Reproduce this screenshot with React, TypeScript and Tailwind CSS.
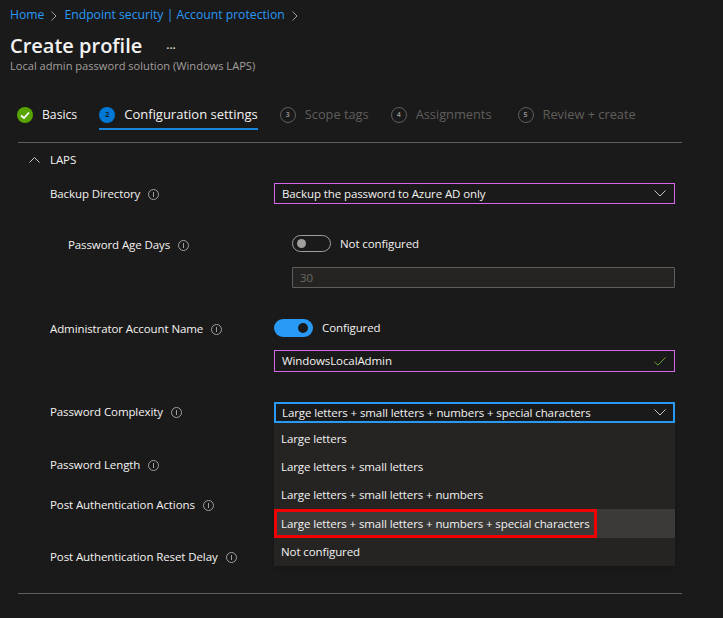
import React from 'react';

function Chevron({ className }: { className?: string }) {
    return (
        <svg width="12" height="7" viewBox="0 0 12 7" fill="none" stroke="#c8c6c4" strokeWidth="1" className={className}>
            <path d="M0.5 0.5 L6 6 L11.5 0.5" />
        </svg>
    );
}

function BreadcrumbArrow() {
    return (
        <svg width="6" height="10" viewBox="0 0 6 10" fill="none" stroke="#a19f9d" strokeWidth="1">
            <path d="M0.5 0.5 L5 5 L0.5 9.5" />
        </svg>
    );
}

function InfoIcon() {
    return (
        <svg width="11" height="11" viewBox="0 0 11 11" fill="none" className="ml-[8px] shrink-0">
            <circle cx="5.5" cy="5.5" r="5" stroke="#a19f9d" strokeWidth="1" />
            <path d="M5.5 3 V8" stroke="#a19f9d" strokeWidth="1" />
        </svg>
    );
}

function Step({ n, label, ml }: { n: number; label: string; ml: string }) {
    return (
        <div className={`flex items-center ${ml}`}>
            <span className="flex h-[16px] w-[16px] items-center justify-center rounded-full border border-[#5f5e5c] text-[7px] font-bold text-[#8a8886]">
                {n}
            </span>
            <span className="ml-[9px] text-[12.8px] text-[#5f5e5c]">{label}</span>
        </div>
    );
}

function Label({ text, indent, top }: { text: string; indent?: boolean; top: string }) {
    return (
        <div className={`flex h-[20px] items-center text-[#f3f2f1] ${indent ? 'ml-[18px]' : ''} ${top}`}>
            {text}
            <InfoIcon />
        </div>
    );
}

const options = [
    'Large letters',
    'Large letters + small letters',
    'Large letters + small letters + numbers',
    'Large letters + small letters + numbers + special characters',
    'Not configured',
];

export default function App() {
    return (
        <div className="h-[618px] w-[723px] overflow-hidden bg-[#1b1a1a] font-['Open_Sans',sans-serif]">
            <div className="flex h-[30px] items-center pl-[10px] pt-[1px] text-[12.2px] text-[#2899f5]">
                <span>Home</span>
                <span className="mx-[7px]"><BreadcrumbArrow /></span>
                <span>Endpoint security | Account protection</span>
                <span className="ml-[7px]"><BreadcrumbArrow /></span>
            </div>
            <div className="flex h-[30px] items-center pl-[10px] pt-[2px]">
                <h1 className="text-[20px] font-semibold text-[#f3f2f1]">Create profile</h1>
                <span className="ml-[24px] mb-[3px] text-[11px] font-bold leading-none text-[#d2d0ce]">...</span>
            </div>
            <p className="pl-[10px] text-[11.1px] leading-[12px] text-[#a19f9d]">Local admin password solution (Windows LAPS)</p>

            <div className="ml-[18px] mt-[19px] h-[52px] w-[664px] border-b border-[#605e5c] pt-[10px]">
                <div className="flex h-[28px] items-center -ml-px">
                    <svg width="16" height="16" viewBox="0 0 16 16" className="shrink-0">
                        <circle cx="8" cy="8" r="8" fill="#57a300" />
                        <path d="M4 8.5 L7 11 L12 5.5" fill="none" stroke="#fff" strokeWidth="1.8" />
                    </svg>
                    <span className="ml-[9px] text-[12.2px] text-[#f3f2f1]">Basics</span>
                    <div className="relative ml-[22px] flex h-[28px] items-center">
                        <span className="flex h-[16px] w-[16px] items-center justify-center rounded-full bg-[#0078d4] text-[7px] font-bold text-[#1b1a1a]">2</span>
                        <span className="ml-[9px] text-[13px] text-[#f3f2f1]">Configuration settings</span>
                        <div className="absolute bottom-[-1px] left-0 right-0 h-[2px] bg-[#1a86d9]" />
                    </div>
                    <Step n={3} label="Scope tags" ml="ml-[22px]" />
                    <Step n={4} label="Assignments" ml="ml-[22px]" />
                    <Step n={5} label="Review + create" ml="ml-[26px]" />
                </div>
            </div>

            <div className="ml-[18px] h-[451px] w-[664px] border-b border-[#605e5c] text-[11.5px] tracking-[-0.1px]">
                <div className="flex h-[33px] items-center pl-[11px]">
                    <svg width="11" height="6" viewBox="0 0 11 6" fill="none" stroke="#c8c6c4" strokeWidth="1">
                        <path d="M0.5 5.5 L5.5 0.5 L10.5 5.5" />
                    </svg>
                    <span className="ml-[10px] text-[#f3f2f1]">LAPS</span>
                </div>

                <div className="flex pl-[32px]">
                    <div className="w-[224px] shrink-0">
                        <Label text="Backup Directory" top="mt-[8px]" />
                        <Label text="Password Age Days" indent top="mt-[31px]" />
                        <Label text="Administrator Account Name" top="mt-[64px]" />
                        <Label text="Password Complexity" top="mt-[63px]" />
                        <Label text="Password Length" top="mt-[33px]" />
                        <Label text="Post Authentication Actions" top="mt-[20px]" />
                        <Label text="Post Authentication Reset Delay" top="mt-[32px]" />
                    </div>

                    <div className="w-[401px] shrink-0">
                        <div className="mt-[7px] flex h-[21px] items-center justify-between border border-[#d866ec] pl-[7px] pr-[8px] text-[#f3f2f1]">
                            Backup the password to Azure AD only
                            <Chevron />
                        </div>

                        <div className="ml-[18px] mt-[31px] flex h-[17px] items-center">
                            <div className="flex h-[17px] w-[39px] items-center rounded-full border border-[#a19f9d] pl-[4px]">
                                <div className="h-[9px] w-[9px] rounded-full bg-[#a19f9d]" />
                            </div>
                            <span className="ml-[9px] text-[#f3f2f1]">Not configured</span>
                        </div>
                        <div className="ml-[18px] mt-[15px] flex h-[21px] items-center rounded-[1px] border border-[#605e5c] bg-[#252423] pl-[7px] text-[#6a6866]">
                            30
                        </div>

                        <div className="mt-[31px] flex h-[18px] items-center">
                            <div className="flex h-[18px] w-[39px] items-center justify-end rounded-full bg-[#2899f5] pr-[5px]">
                                <div className="h-[10px] w-[10px] rounded-full bg-[#1b1a1a]" />
                            </div>
                            <span className="ml-[9px] text-[#f3f2f1]">Configured</span>
                        </div>
                        <div className="mt-[13px] flex h-[22px] items-center justify-between border border-[#d866ec] pl-[7px] pr-[8px] text-[#f3f2f1]">
                            WindowsLocalAdmin
                            <svg width="12" height="9" viewBox="0 0 12 9" fill="none" stroke="#6ba32f" strokeWidth="1">
                                <path d="M0.5 5 L4 8 L11.5 0.5" />
                            </svg>
                        </div>

                        <div className="relative mt-[30px]">
                            <div className="flex h-[21px] items-center justify-between border-2 border-[#2899f5] pl-[6px] pr-[7px] text-[#f3f2f1]">
                                Large letters + small letters + numbers + special characters
                                <Chevron />
                            </div>
                            <div className="absolute left-0 right-0 top-[21px] bg-[#252423] pt-[1px] shadow-md">
                                {options.map((o, i) => (
                                    <div key={o} className={`flex h-[28.4px] items-center text-[#f3f2f1] ${i === 3 ? 'bg-[#3b3a39]' : ''}`}>
                                        <span className={`flex h-full items-center whitespace-nowrap ${i === 3 ? 'w-[323px] border-[3px] border-[#f00000] pl-[4px]' : 'pl-[7px]'}`}>{o}</span>
                                    </div>
                                ))}
                            </div>
                        </div>
                    </div>
                </div>
            </div>
        </div>
    );
}
